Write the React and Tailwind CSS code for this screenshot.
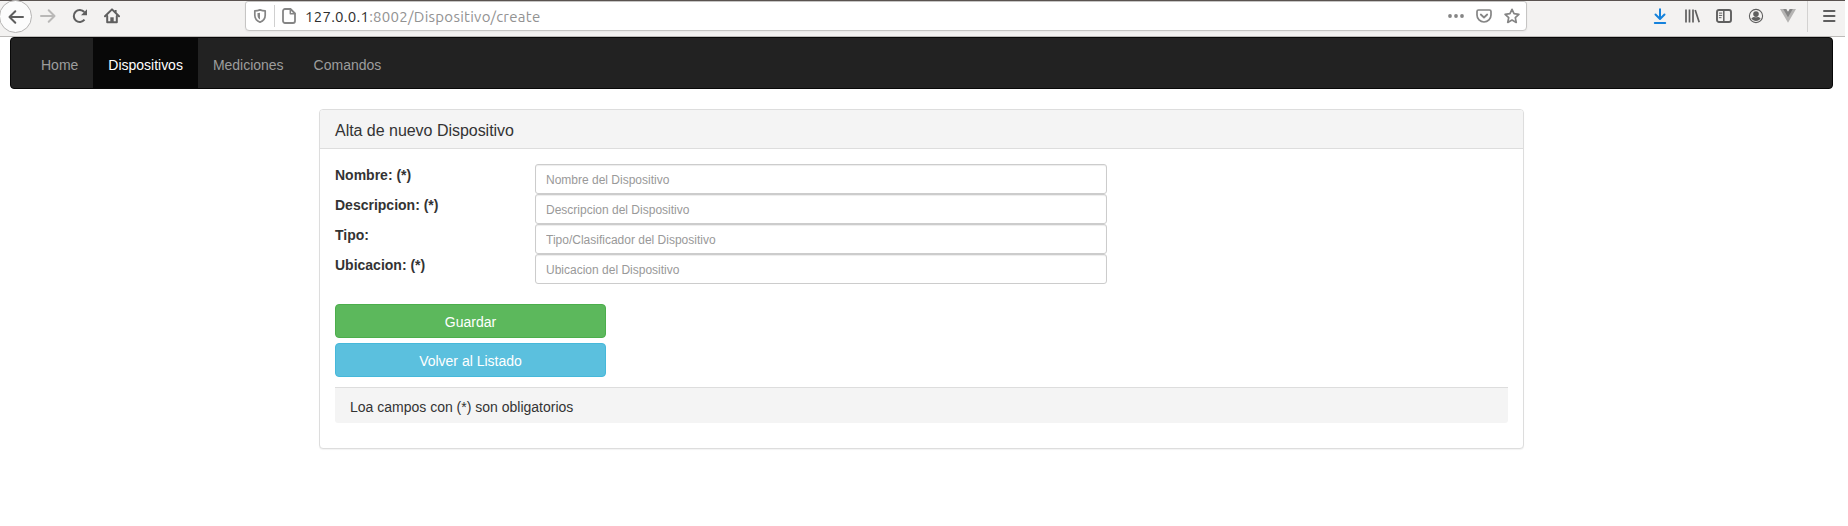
const navItems = [
  { label: 'Home' },
  { label: 'Dispositivos', active: true },
  { label: 'Mediciones' },
  { label: 'Comandos' },
];

const fields = [
  { label: 'Nombre: (*)', placeholder: 'Nombre del Dispositivo' },
  { label: 'Descripcion: (*)', placeholder: 'Descripcion del Dispositivo' },
  { label: 'Tipo:', placeholder: 'Tipo/Clasificador del Dispositivo' },
  { label: 'Ubicacion: (*)', placeholder: 'Ubicacion del Dispositivo' },
];

function Icon({ className = '', children }) {
  return (
    <svg
      viewBox="0 0 16 16"
      width="16"
      height="16"
      fill="none"
      stroke="currentColor"
      strokeWidth="2"
      strokeLinecap="round"
      strokeLinejoin="round"
      className={`block shrink-0 ${className}`}
    >
      {children}
    </svg>
  );
}

function BrowserBar() {
  return (
    <div className="flex h-[37px] w-[1845px] items-start border-t border-b border-t-[#5a5350] border-b-[#bdbbb9] bg-[#f3f2f1] text-[#5f5f5f]">
      <div className="-ml-px -mt-px flex size-[33px] shrink-0 items-center justify-center rounded-full border border-[#b5b4b3] bg-[#fcfcfc]">
        <Icon>
          <path d="M15 8H1.6M7.3 2.2 1.5 8l5.800 5.800" />
        </Icon>
      </div>
      <Icon className="mt-[7px] ml-2 text-[#b9b8b7]">
        <path d="M1 8h13.400M8.700 2.200 14.500 8l-5.800 5.800" />
      </Icon>
      <Icon className="mt-[7px] ml-4">
        <path d="M12.500 11.700A6 6 0 1 1 12.300 4" strokeLinecap="butt" />
        <path d="M15 1.300v6H9z" fill="currentColor" stroke="none" />
      </Icon>
      <Icon className="mt-[7px] ml-4">
        <path d="M1 8.300 8 1.400l7 6.900" />
        <path d="M3.200 8v6.200h9.600V8" />
        <path d="M11.600 2v2.600" strokeLinecap="butt" />
        <path d="M6.300 15V9.300h3.400V15z" fill="currentColor" stroke="none" />
      </Icon>
      <div className="ml-[125px] flex h-[30px] w-[1282px] shrink-0 items-center rounded-b-[4px] rounded-t-[3px] border border-[#c6c5c4] bg-white pr-[6px] pl-[6px] text-[#858585] shadow-[0_1px_2px_rgba(0,0,0,0.05)]">
        <Icon>
          <path d="M8 1.900c2 .7 3.800.9 5.200.9v4.400c0 3.500-2 5.700-5.200 7-3.200-1.300-5.200-3.500-5.200-7V2.800c1.400 0 3.200-.2 5.200-.9z" strokeWidth="1.700" />
          <path d="M8 4.700v6.700c-1.700-1-2.500-2.300-2.500-4.200V5c.9 0 1.700-.1 2.500-.3z" fill="currentColor" stroke="none" />
        </Icon>
        <div className="ml-[6px] h-[22px] w-px bg-[#d0d0d0]" />
        <Icon className="ml-[6px]">
          <path d="M4 1h5.500L14 5.500V13a2 2 0 0 1-2 2H4a2 2 0 0 1-2-2V3a2 2 0 0 1 2-2z" strokeWidth="1.800" />
          <path d="M9.300 1.300v4.500h4.500" strokeWidth="1.500" />
        </Icon>
        <div className="ml-[8px] whitespace-nowrap pt-px font-['Ubuntu','Noto_Sans',sans-serif] text-[15px] leading-5 tracking-[0.26px] text-[#929292]">
          <span className="text-[#2e2e2e]">127.0.0.1</span>:8002/Dispositivo/create
        </div>
        <Icon className="ml-auto">
          <g fill="currentColor" stroke="none">
            <circle cx="2" cy="8" r="1.900" />
            <circle cx="8" cy="8" r="1.900" />
            <circle cx="14" cy="8" r="1.900" />
          </g>
        </Icon>
        <Icon className="ml-3">
          <path d="M2.500 2h11A1.500 1.500 0 0 1 15 3.500V7A7 7 0 0 1 1 7V3.500A1.500 1.500 0 0 1 2.500 2z" strokeWidth="1.700" />
          <path d="m4.800 6.500 3.200 3 3.200-3" strokeWidth="1.800" />
        </Icon>
        <Icon className="ml-3">
          <path d="m8 1.300 2.050 4.400 4.850.600-3.600 3.300.950 4.850L8 12.050l-4.250 2.400.950-4.850L1.100 6.300l4.850-.600z" strokeWidth="1.700" />
        </Icon>
      </div>
      <Icon className="mt-[7px] ml-[125px] text-[#1582dc]">
        <path d="M8 1.200v9.300M3.500 6.500 8 11l4.500-4.500M2.800 15h10.400" />
      </Icon>
      <Icon className="mt-[7px] ml-4">
        <path d="M2 1.500v13M5.500 1.500v13M9 1.500v13M11.200 2 15.200 14.200" strokeWidth="1.700" strokeLinecap="butt" />
      </Icon>
      <Icon className="mt-[7px] ml-4">
        <rect x="1" y="2" width="14" height="12" rx="2" strokeWidth="1.900" />
        <path d="M7.800 2v12" strokeWidth="1.500" />
        <path d="M3.300 5.100h2.500M3.300 7.400h2.500M3.300 9.700h1.800" strokeWidth="1" />
      </Icon>
      <Icon className="mt-[7px] ml-4">
        <circle cx="8" cy="8" r="6.600" strokeWidth="1.100" />
        <circle cx="8" cy="6.100" r="2.800" fill="currentColor" stroke="none" />
        <path d="M3.400 10.200c1.200-1 2.200-1.300 2.800-1.300.6.500 3 .5 3.600 0 .6 0 1.600.3 2.800 1.300-1 1.700-2.600 2.700-4.600 2.700s-3.600-1-4.600-2.700z" fill="currentColor" stroke="none" />
      </Icon>
      <Icon className="mt-[7px] ml-4">
        <g stroke="none">
          <path d="M0 1h6.200L8 4l1.800-3H16L8 14.700z" fill="#b5b4b3" />
          <path d="M3.200 1h3L8 4l1.800-3h3L8 9.300z" fill="#858585" />
        </g>
      </Icon>
      <div className="ml-[11px] h-[31px] w-px shrink-0 bg-[#d3d2d1]" />
      <Icon className="mt-[7px] ml-[13px]">
        <path d="M3 3h10.500M3 8h10.500M3 13h10.500" />
      </Icon>
    </div>
  );
}

function Navbar() {
  return (
    <nav className="mr-[15px] ml-[10px] flex h-[52px] rounded-[4px] border border-[#080808] bg-[#222] pl-[15px]">
      {navItems.map((item) => (
        <a
          key={item.label}
          href="#"
          className={`px-[15px] pt-[17px] pb-[13px] text-[14px] leading-5 tracking-[-0.01px] ${
            item.active ? 'bg-[#080808] text-white' : 'text-[#9d9d9d]'
          }`}
        >
          {item.label}
        </a>
      ))}
    </nav>
  );
}

export default function App() {
  return (
    <div className="h-[526px] overflow-hidden bg-white font-['Liberation_Sans',Arial,sans-serif] text-[14px] leading-5 text-[#333]">
      <BrowserBar />
      <Navbar />
      <section className="mt-5 ml-[319px] h-[340px] w-[1205px] rounded-[4px] border border-[#ddd] bg-white shadow-[0_1px_1px_rgba(0,0,0,0.05)]">
        <header className="flex h-[39px] items-center rounded-t-[3px] border-b border-[#ddd] bg-[#f4f4f4] px-[15px] pt-[3px]">
          <h3 className="text-[16px] leading-[18px] tracking-[-0.03px]">Alta de nuevo Dispositivo</h3>
        </header>
        <div className="p-[15px]">
          {fields.map((field) => (
            <label key={field.label} className="flex h-[30px]">
              <span className="w-[200px] pt-px font-bold">{field.label}</span>
              <input
                type="text"
                placeholder={field.placeholder}
                className="h-[30px] w-[572px] rounded-[3px] border border-[#ccc] bg-white px-[10px] pt-[6px] pb-[4px] text-[12px] leading-[18px] shadow-[inset_0_1px_1px_rgba(0,0,0,0.075)] placeholder:text-[#999]"
              />
            </label>
          ))}
          <div className="mt-5 flex w-[271px] flex-col gap-[5px] text-white">
            <button className="h-[34px] rounded-[4px] border border-[#4cae4c] bg-[#5cb85c] pt-[2px]">Guardar</button>
            <button className="h-[34px] rounded-[4px] border border-[#46b8da] bg-[#5bc0de] pt-[2px]">Volver al Listado</button>
          </div>
          <footer className="mt-[10px] h-9 rounded-b-[3px] border-t border-[#ddd] bg-[#f4f4f4] px-[15px] pt-[9px]">
            Loa campos con (*) son obligatorios
          </footer>
        </div>
      </section>
    </div>
  );
}
